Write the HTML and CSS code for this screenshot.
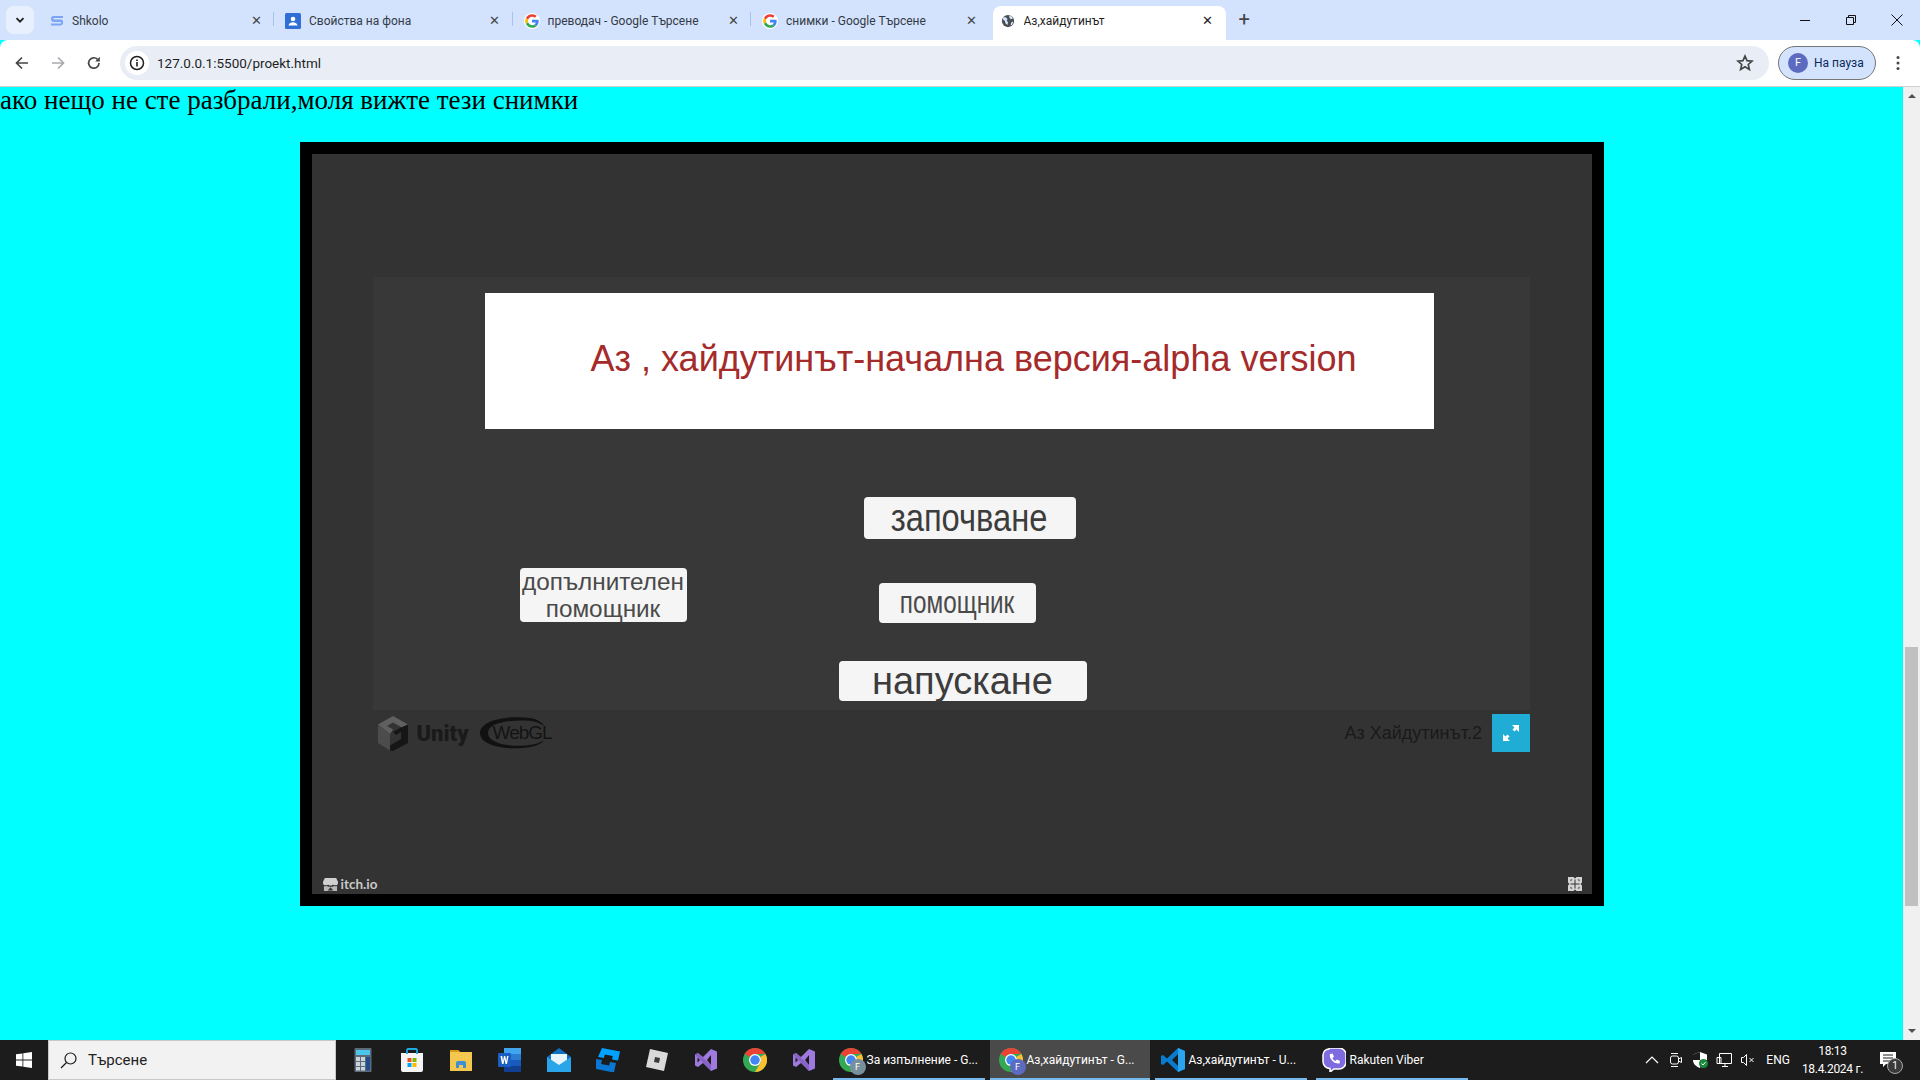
FILE: index.html
```html
<!DOCTYPE html>
<html lang="bg">
<head>
<meta charset="utf-8">
<title>Аз,хайдутинът</title>
<link rel="stylesheet" href="styles.css">
</head>
<body>
<svg class="defs" width="0" height="0" aria-hidden="true">
  <symbol id="g" viewBox="0 0 48 48">
    <circle cx="24" cy="24" r="24" fill="#fff"/>
    <path fill="#ea4335" d="M24 11c3.4 0 6.300 1.200 8.600 3.300l5.700-5.700C34.800 5.300 29.900 3.500 24 3.500 16 3.500 9.100 8.100 5.700 14.800l6.700 5.200C14 15 18.600 11 24 11z"/>
    <path fill="#4285f4" d="M44 24.500c0-1.500-.1-2.900-.4-4.300H24v8h11.300c-.5 2.600-2 4.800-4.200 6.300l6.500 5C41.500 36 44 30.800 44 24.500z"/>
    <path fill="#fbbc05" d="M12.400 28c-.4-1.200-.6-2.600-.6-4s.2-2.800.6-4l-6.700-5.200C4.300 17.500 3.500 20.700 3.500 24s.8 6.500 2.200 9.200z"/>
    <path fill="#34a853" d="M24 44.500c5.500 0 10.200-1.800 13.600-5l-6.500-5c-1.800 1.200-4.200 2-7.100 2-5.400 0-10-3.700-11.600-8.500l-6.700 5.200C9.100 39.900 16 44.500 24 44.500z"/>
  </symbol>
  <symbol id="chrome" viewBox="0 0 48 48">
    <circle cx="24" cy="24" r="24" fill="#34a853"/>
    <path fill="#ea4335" d="M24 0a24 24 0 0 1 20.800 12H24a12 12 0 0 0-10.400 6L3.200 12A24 24 0 0 1 24 0z"/>
    <path fill="#fbc02d" d="M44.800 12A24 24 0 0 1 24 48l10.400-18a12 12 0 0 0 0-12z"/>
    <circle cx="24" cy="24" r="12" fill="#fff"/>
    <circle cx="24" cy="24" r="9.500" fill="#4285f4"/>
  </symbol>
  <symbol id="vs" viewBox="0 0 24 24">
    <path fill="#9e7ade" d="M17 1l6 2.500v17L17 23l-8-8-5 4-3-1.500v-11L4 5l5 4zM17 7l-4 5 4 5zM3.500 9.500v5L6 12z"/>
    <path fill="#7f5cc0" d="M1 6.500L4 5l13 12v6L4 9.500 1 6.500z" opacity=".75"/>
  </symbol>
</svg>

<div class="tabstrip">
  <button class="tabsearch" aria-label="Раздели">
    <svg width="12" height="12" viewBox="0 0 12 12"><path d="M2.500 4.200L6 7.700l3.500-3.500" fill="none" stroke="#1f1f1f" stroke-width="1.800"/></svg>
  </button>
  <div class="tab tab-sep">
    <svg class="fav" viewBox="0 0 16 16"><path d="M2 5.500C2 3.500 3.500 3 5 3h9v2H5c-1 0-1 1.500 0 1.500h7c3 0 3 6-.5 6H2v-2h9.500c1 0 1-1.500 0-1.500H5C3 9 2 7.500 2 5.500z" fill="#7ba6f7"/></svg>
    <span class="tab-title">Shkolo</span>
    <span class="tab-x">✕</span>
  </div>
  <div class="tab tab-sep">
    <svg class="fav" viewBox="0 0 16 16"><rect width="16" height="16" rx="1.500" fill="#2f6fd6"/><circle cx="8" cy="6" r="2.300" fill="#fff"/><path d="M3.500 12.500c.5-2.500 2.500-3.300 4.500-3.300s4 .8 4.500 3.300z" fill="#fff"/></svg>
    <span class="tab-title">Свойства на фона</span>
    <span class="tab-x">✕</span>
  </div>
  <div class="tab tab-sep">
    <svg class="fav"><use href="#g"/></svg>
    <span class="tab-title">преводач - Google Търсене</span>
    <span class="tab-x">✕</span>
  </div>
  <div class="tab">
    <svg class="fav"><use href="#g"/></svg>
    <span class="tab-title">снимки - Google Търсене</span>
    <span class="tab-x">✕</span>
  </div>
  <div class="tab tab-active">
    <svg class="fav" viewBox="0 0 16 16"><circle cx="8" cy="8" r="7" fill="#4a4d52"/><path d="M3 3.500l3 .5 1.500 2-1 1.500 1.500 2-.5 3-2.500-2-.5-2.500L2 6zM9.500 1.500l3 1.500 1 2.500-2.500.5-1.500-2zM13 8.500l1 1-1.500 3-1.500.5.500-3z" fill="#d3e3fd"/></svg>
    <span class="tab-title">Аз,хайдутинът</span>
    <span class="tab-x">✕</span>
  </div>
  <span class="newtab">+</span>
  <div class="winctl">
    <svg width="12" height="12" viewBox="0 0 12 12"><path d="M1 6.500h10" stroke="#111" fill="none"/></svg>
    <svg width="12" height="12" viewBox="0 0 12 12"><path d="M1.500 3.500h7v7h-7zM3.500 3.500v-2h7v7h-2" stroke="#111" fill="none"/></svg>
    <svg width="12" height="12" viewBox="0 0 12 12"><path d="M.5.500l11 11M11.500.500l-11 11" stroke="#111" fill="none"/></svg>
  </div>
</div>

<div class="toolbar">
  <svg class="navicon" viewBox="0 0 16 16"><path d="M14 8H3M8 2.500L2.500 8 8 13.500" fill="none" stroke="#444746" stroke-width="1.700"/></svg>
  <svg class="navicon" viewBox="0 0 16 16"><path d="M2 8h11M8 2.500L13.500 8 8 13.500" fill="none" stroke="#a9abae" stroke-width="1.700"/></svg>
  <svg class="navicon" viewBox="0 0 16 16"><path d="M13 8a5.200 5.200 0 1 1-1.500-3.700" fill="none" stroke="#444746" stroke-width="1.700"/><path d="M13.800 1.800v4.600H9.200z" fill="#444746"/></svg>
  <div class="omnibox">
    <span class="info">
      <svg width="16" height="16" viewBox="0 0 16 16"><circle cx="8" cy="8" r="6.500" fill="none" stroke="#1f1f1f" stroke-width="1.500"/><path d="M8 7v4.500M8 4.500v1.500" stroke="#1f1f1f" stroke-width="1.600"/></svg>
    </span>
    <span class="url">127.0.0.1:5500/proekt.html</span>
    <svg class="star" viewBox="0 0 16 16"><path d="M8 1.800l1.800 4.100 4.500.4-3.400 3 1 4.400L8 11.400l-3.900 2.300 1-4.400-3.400-3 4.500-.4z" fill="none" stroke="#444746" stroke-width="1.500"/></svg>
  </div>
  <div class="profile"><span class="avatar">F</span><span class="paused">На пауза</span></div>
  <svg class="menu" viewBox="0 0 4 16"><circle cx="2" cy="2.500" r="1.500" fill="#444746"/><circle cx="2" cy="8" r="1.500" fill="#444746"/><circle cx="2" cy="13.500" r="1.500" fill="#444746"/></svg>
</div>

<div class="viewport">
  <main class="page">
    <p class="intro">ако нещо не сте разбрали,моля вижте тези снимки</p>
    <div class="frame">
      <div class="player">
        <div class="canvas">
          <div class="title"><span>Аз , хайдутинът-начална версия-alpha version</span></div>
          <div class="btn btn-start"><span>започване</span></div>
          <div class="btn btn-extra"><span>допълнителен<br>помощник</span></div>
          <div class="btn btn-help"><span>помощник</span></div>
          <div class="btn btn-quit"><span>напускане</span></div>
        </div>
        <div class="unity-footer">
          <svg class="unity-cube" viewBox="0 0 30 35">
            <path d="M15 0l15 8.500-6 3L15 6.500 9 10l6 3.500-3 4.500L0 8.500z" fill="#606060"/>
            <path d="M0 8.500L12 18v16.500L0 27z" fill="#4c4c4c"/>
            <path d="M30 8.500V27l-15 8-3-.5v-5l6-3.500 5-3v-7l-5 3-3-3 7-4z" fill="#161616"/>
          </svg>
          <span class="unity-word">Unity</span>
          <span class="webgl">
            <svg class="webgl-ring" viewBox="0 0 76 32"><path d="M50 1C28-2 0 3 0 16s28 18 50 14c8-1.500 12-4 14-7-4 3-10 5-18 5.500C28 30 8 26 8 16S28 3 46 3.500c8 .3 14 2.500 18 5.500-2-4-7-7-14-8z" fill="#111"/></svg>
            <span class="webgl-word">WebGL</span>
          </span>
          <span class="game-name">Аз Хайдутинът.2</span>
          <span class="fs-btn">
            <svg width="18" height="18" viewBox="0 0 18 18"><path d="M10 1h7v7l-2.500-2.500-2 2-2-2 2-2zM8 17H1v-7l2.500 2.500 2-2 2 2-2 2z" fill="#fff"/></svg>
          </span>
        </div>
        <div class="itch">
          <svg class="itch-icon" viewBox="0 0 16 16"><path d="M2 1h12l2 4v2a2 2 0 0 1-3 1.500A2 2 0 0 1 10.500 8 2 2 0 0 1 8 9a2 2 0 0 1-2.500-1A2 2 0 0 1 3 8.500 2 2 0 0 1 0 7V5z" fill="#d0d0d0"/><path d="M1 9.500c1 .5 2 .5 3 0 1 .5 2 1 4 1s3-.5 4-1c1 .5 2 .5 3 0V15H1z" fill="#b8b8b8"/><path d="M8 11l-3 3.500h6z" fill="#333"/></svg>
          <span>itch.io</span>
        </div>
        <svg class="itch-fs" viewBox="0 0 14 14"><path d="M0 0h5.500L7 1.500 8.500 0H14v5.500L12.500 7 14 8.500V14H8.500L7 12.500 5.500 14H0V8.500L1.500 7 0 5.500z" fill="#d4d4d4"/><path d="M6.500 2.500h1v4h4v1h-4v4h-1v-4h-4v-1h4z" fill="#333"/><path d="M2.500 2.500h2l-2 2zM11.500 2.500v2l-2-2zM2.500 11.500v-2l2 2zM11.500 11.500h-2l2-2z" fill="#333"/></svg>
      </div>
    </div>
  </main>
  <aside class="scrollbar">
    <span class="arrow-up"></span>
    <span class="thumb"></span>
    <span class="arrow-down"></span>
  </aside>
</div>

<footer class="taskbar">
  <span class="start">
    <svg width="16" height="16" viewBox="0 0 16 16"><path d="M0 2.300l6.500-.9v6.200H0zM7.300 1.300L16 0v7.600H7.300zM0 8.400h6.500v6.200L0 13.700zM7.300 8.400H16V16l-8.700-1.300z" fill="#fff"/></svg>
  </span>
  <div class="search">
    <svg width="17" height="17" viewBox="0 0 17 17"><circle cx="10.500" cy="6.500" r="5.500" fill="none" stroke="#1c1c1c" stroke-width="1.200"/><path d="M6.500 10.500L1 16" stroke="#1c1c1c" stroke-width="1.300"/></svg>
    <span>Търсене</span>
  </div>
  <div class="pinned">
    <span class="pin"><svg class="tb-ic" viewBox="0 0 24 24"><rect x="3.500" y="0" width="17" height="24" rx="1" fill="#5d6b78"/><rect x="5" y="2" width="14" height="5" fill="#49c6ea"/><path d="M5 9h4v4H5zM10 9h4v4h-4zM5 14h4v4H5zM10 14h4v4h-4zM5 19h4v3.500H5zM10 19h4v3.500h-4z" fill="#c9d3da"/><rect x="15" y="9" width="4" height="13.500" fill="#1e4f8c"/></svg></span>
    <span class="pin"><svg class="tb-ic" viewBox="0 0 24 24"><path d="M1 5h22v17a2 2 0 0 1-2 2H3a2 2 0 0 1-2-2z" fill="#f5f5f5"/><path d="M7 6V2a1 1 0 0 1 1-1h8a1 1 0 0 1 1 1v4" fill="none" stroke="#21a8e0" stroke-width="1.800"/><path d="M7.500 10h4v4h-4z" fill="#f25022"/><path d="M12.500 10h4v4h-4z" fill="#7fba00"/><path d="M7.500 15h4v4h-4z" fill="#00a4ef"/><path d="M12.500 15h4v4h-4z" fill="#ffb900"/></svg></span>
    <span class="pin"><svg class="tb-ic" viewBox="0 0 24 24"><path d="M1 2h8l2 2h12v19H1z" fill="#f4c84e"/><path d="M1 2h8l2 2H1z" fill="#d99a16"/><path d="M7 20v-5a2 2 0 0 1 2-2h6a2 2 0 0 1 2 2v5h-3v-3h-4v3z" fill="#3f8fd2"/></svg></span>
    <span class="pin"><svg class="tb-ic" viewBox="0 0 24 24"><path d="M6 0h17v6H6z" fill="#41a5ee"/><path d="M6 6h17v6H6z" fill="#2b7cd3"/><path d="M6 12h17v6H6z" fill="#185abd"/><path d="M6 18h17v6H6z" fill="#103f91"/><rect x="0" y="5" width="13" height="14" rx="1" fill="#1a5ec2"/><path d="M2.500 8l1.500 8h1.500l1-5 1 5h1.500l1.500-8H9l-.8 5-1-5H6l-1 5-.8-5z" fill="#fff"/></svg></span>
    <span class="pin"><svg class="tb-ic" viewBox="0 0 24 24"><path d="M0 9l12-9 12 9v15H0z" fill="#0f6fc0"/><path d="M4 6h16v8l-8 5-8-5z" fill="#e8f4fb"/><path d="M0 9l12 8 12-8v15H0z" fill="#29a5ea"/></svg></span>
    <span class="pin"><svg class="tb-ic" viewBox="0 0 24 24"><path d="M6 0l18 3.500-2 9-6-1 .8-3.500-8-1.500-.8 3.500-6-1z" fill="#00a2ff"/><path d="M0 11l6 1-.8 4 8 1.500.8-3.500 6 1-2 9.500L0 21z" fill="#0a78d2"/></svg></span>
    <span class="pin"><svg class="tb-ic" viewBox="0 0 24 24"><path d="M5 1l18 4-4 18-18-4z" fill="#dadada"/><path d="M10 9l5 1-1 5-5-1z" fill="#3a3a3a"/></svg></span>
    <span class="pin"><svg class="tb-ic"><use href="#vs"/></svg></span>
    <span class="pin"><svg class="tb-ic"><use href="#chrome"/></svg></span>
    <span class="pin"><svg class="tb-ic"><use href="#vs"/></svg></span>
  </div>
  <div class="tasks">
    <div class="task"><span class="task-ic"><svg class="tb-ic"><use href="#chrome"/></svg><span class="badge badge-grey">F</span></span><span class="task-txt">За изпълнение - G...</span></div>
    <div class="task task-active"><span class="task-ic"><svg class="tb-ic"><use href="#chrome"/></svg><span class="badge">F</span></span><span class="task-txt">Аз,хайдутинът - G...</span></div>
    <div class="task"><span class="task-ic"><svg class="tb-ic" viewBox="0 0 24 24"><path d="M17 0l7 3v18l-7 3L6 13.500 2 17l-2-1V8l2-1 4 3.500z" fill="#0a7ccf"/><path d="M17 6l-6 6 6 6z" fill="#1c1c1c"/><path d="M17 0l7 3v18l-7 3z" fill="#2aa4f0"/></svg></span><span class="task-txt">Аз,хайдутинът - U...</span></div>
    <div class="task"><span class="task-ic"><svg class="tb-ic" viewBox="0 0 24 24"><path d="M7 0h10a7 7 0 0 1 7 7v7a7 7 0 0 1-7 7h-5l-4 3v-3.500A7 7 0 0 1 1 14V7a6 6 0 0 1 6-6z" fill="#7f6be0" stroke="#fff" stroke-width="1.500"/><path d="M8 6l2.500-.5 1.500 3-1.500 1.500c.5 1.500 1.500 2.500 3 3l1.500-1.500 3 1.500-.5 2.500c-5 1-11-5-9.500-9.500z" fill="#fff"/></svg></span><span class="task-txt">Rakuten Viber</span></div>
  </div>
  <div class="tray">
    <svg class="tray-ic" viewBox="0 0 16 16"><path d="M2 11l6-6 6 6" fill="none" stroke="#fff" stroke-width="1.200"/></svg>
    <svg class="tray-ic" viewBox="0 0 16 16"><rect x="2.500" y="4" width="8" height="8" rx="2" fill="none" stroke="#fff"/><path d="M10.500 7l3-1.500v5l-3-1.500M3 1.500h7M3 14.500h7" fill="none" stroke="#fff"/></svg>
    <svg class="tray-ic" viewBox="0 0 16 16"><path d="M8 0l7 2.500V8c0 4-3 6.500-7 8-4-1.500-7-4-7-8V2.500z" fill="#fff"/><path d="M8 0v8H1V2.500zM8 8h7c0 4-3 6.500-7 8z" fill="#1c1c1c"/><circle cx="11.500" cy="11.500" r="4.500" fill="#1a8a3c"/><path d="M9.500 11.500l1.500 1.500 2.500-2.800" fill="none" stroke="#fff"/></svg>
    <svg class="tray-ic" viewBox="0 0 16 16"><path d="M3.500 1.500h12v10h-12zM1 5.500h4v6H1zM9 11.500v3M6 14.500h6" fill="none" stroke="#fff"/></svg>
    <svg class="tray-ic" viewBox="0 0 16 16"><path d="M1.500 5.500h2l3-3v11l-3-3h-2zM9.500 6l4 4M13.500 6l-4 4" fill="none" stroke="#fff"/></svg>
    <span class="lang">ENG</span>
    <span class="clock"><span>18:13</span><span>18.4.2024 г.</span></span>
    <span class="notif">
      <svg width="16" height="16" viewBox="0 0 16 16"><path d="M0 0h16v12H6l-3 3v-3H0z" fill="#fff"/><path d="M3 3h10M3 6h10M3 9h7" stroke="#1c1c1c"/></svg>
      <span class="notif-n">1</span>
    </span>
  </div>
</footer>
</body>
</html>
```

FILE: styles.css
```css
* { box-sizing: border-box; }
html, body { margin: 0; height: 100%; overflow: hidden; }
body {
  width: 1920px;
  height: 1080px;
  display: flex;
  flex-direction: column;
  font-family: "Roboto", "Noto Sans", sans-serif;
  background: #0ff;
}
.defs { position: absolute; }

/* Tab strip */
.tabstrip {
  height: 40px;
  flex: none;
  display: flex;
  align-items: flex-start;
  background: #d3e3fd;
  padding-left: 6px;
}
.tabsearch {
  width: 28px;
  height: 28px;
  margin-top: 6px;
  padding: 0;
  border: 0;
  border-radius: 8px;
  background: #e9f0fd;
  display: flex;
  align-items: center;
  justify-content: center;
}
.tab {
  width: 238.5px;
  height: 34px;
  margin-top: 6px;
  padding: 1px 11px 6px 0;
  position: relative;
  display: flex;
  align-items: center;
  font-size: 12px;
  color: #333a45;
}
.tab:first-of-type { width: 240px; }
.tab .fav { width: 16px; height: 16px; flex: none; margin-left: 11px; margin-right: 8px; }
.tabsearch + .tab .fav { margin-left: 15px; margin-right: 7px; }
.tab-title { flex: 1; white-space: nowrap; overflow: hidden; }
.tab-x { font-size: 13px; color: #444746; width: 14px; text-align: center; }
.tab-sep::after {
  content: "";
  position: absolute;
  right: 0;
  top: 6px;
  height: 14px;
  width: 1px;
  background: #a8c1ee;
}
.tab-active {
  width: 233px;
  margin-left: 3px;
  height: 34px;
  background: #fff;
  border-radius: 8px 8px 0 0;
  color: #1f1f1f;
}
.tab-active .fav { margin-left: 8px; margin-right: 9px; width: 14px; height: 14px; }
.tab-active .tab-x { color: #1f1f1f; }
.newtab { margin: 7px 0 0 13px; font-size: 20px; line-height: 24px; color: #444746; }
.winctl {
  margin-left: auto;
  width: 138px;
  height: 40px;
  padding: 0 17px 0 17px;
  display: flex;
  align-items: center;
  justify-content: space-between;
}

/* Toolbar */
.toolbar {
  height: 47px;
  flex: none;
  display: flex;
  align-items: center;
  background: #fff;
  border-bottom: 1px solid #d0d0d0;
  border-radius: 8px 8px 0 0;
  padding: 0 0 1px 14px;
  gap: 20px;
}
.navicon { width: 16px; height: 16px; flex: none; }
.omnibox {
  width: 1649px;
  height: 34px;
  flex: none;
  border-radius: 17px;
  background: #e9eef6;
  display: flex;
  align-items: center;
  padding: 0 15px 0 5px;
  margin-left: -2px;
}
.info {
  width: 24px;
  height: 24px;
  border-radius: 50%;
  background: #fff;
  display: flex;
  align-items: center;
  justify-content: center;
}
.url { margin-left: 8px; font-size: 13.5px; color: #1f1f1f; flex: 1; }
.star { width: 18px; height: 18px; }
.profile {
  width: 98px;
  height: 34px;
  flex: none;
  margin-left: -11px;
  border: 1px solid #747775;
  border-radius: 17px;
  background: #d3e3fd;
  display: flex;
  align-items: center;
  padding-left: 9px;
  gap: 6px;
  font-size: 12px;
  color: #0a2a5c;
}
.avatar {
  width: 20px;
  height: 20px;
  border-radius: 50%;
  background: #5c6bc0;
  color: #fff;
  display: flex;
  align-items: center;
  justify-content: center;
  font-size: 11px;
  flex: none;
}
.menu { width: 4px; height: 16px; flex: none; }

/* Page */
.viewport { flex: 1; display: flex; min-height: 0; }
.page { flex: 1; min-width: 0; background: #0ff; }
.intro {
  margin: 0;
  font: 27px/27px "Liberation Serif", serif;
  color: #000;
}
.frame {
  width: 1304px;
  height: 764px;
  margin: 28px auto 0;
  border: 12px solid #000;
  background: #333;
}
.player {
  position: relative;
  width: 1280px;
  height: 740px;
  padding: 123px 62px 0 61px;
}
.canvas {
  position: relative;
  width: 1157px;
  height: 433px;
  background: #383838;
}
.title {
  position: absolute;
  left: 112px;
  top: 16px;
  width: 949px;
  height: 136px;
  background: #fff;
  color: #a52a2a;
  font: 36px/132px "Liberation Sans", sans-serif;
  text-align: center;
  padding-left: 29px;
  white-space: nowrap;
}
.btn {
  position: absolute;
  background: #f5f5f5;
  border-radius: 4px;
  color: #3c3c3c;
  font-family: "Liberation Sans", sans-serif;
  text-align: center;
  white-space: nowrap;
  display: flex;
  align-items: center;
  justify-content: center;
}
.btn span { display: inline-block; }
.btn-start { left: 491px; top: 220px; width: 212px; height: 42px; font-size: 38px; }
.btn-start span { transform: scaleX(.86); }
.btn-extra { left: 147px; top: 291px; width: 167px; height: 54px; font-size: 24.300px; line-height: 27px; color: #4a4a4a; }
.btn-help { left: 506px; top: 306px; width: 157px; height: 40px; font-size: 31px; color: #4a4a4a; }
.btn-help span { transform: scaleX(.783); }
.btn-quit { left: 466px; top: 384px; width: 248px; height: 40px; font-size: 38px; }

.unity-footer {
  width: 1158px;
  height: 42px;
  padding: 4px 0 0 5px;
  display: flex;
  align-items: flex-start;
}
.unity-cube { width: 30px; height: 35px; flex: none; margin-top: 2px; }
.unity-word {
  margin: 8px 0 0 9px;
  font: 900 22px/24px "Roboto", sans-serif;
  color: #1a1a1a;
}
.webgl { position: relative; width: 76px; height: 32px; margin: 3px 0 0 11px; }
.webgl-ring {
  position: absolute;
  left: 0;
  top: 0;
  width: 76px;
  height: 32px;
}
.webgl-word {
  position: absolute;
  left: 13px;
  top: 4px;
  font: 19px/24px "Liberation Sans", sans-serif;
  letter-spacing: -1px;
  color: #141414;
}
.game-name {
  margin: 6px 0 0 auto;
  font: 18px/26px "Liberation Sans", sans-serif;
  color: #1a1a1a;
}
.fs-btn {
  width: 38px;
  height: 38px;
  margin-left: 10px;
  margin-right: .5px;
  background: #1fadd6;
  display: flex;
  align-items: center;
  justify-content: center;
  flex: none;
}
.itch {
  position: absolute;
  left: 11px;
  bottom: 1px;
  display: flex;
  align-items: center;
  gap: 3px;
  font: bold 13.500px/18px "Lato", sans-serif;
  color: #c8c8c8;
}
.itch-icon { width: 15px; height: 15px; }
.itch-fs { position: absolute; right: 10px; bottom: 3px; width: 14px; height: 14px; }

/* Scrollbar */
.scrollbar {
  width: 17px;
  flex: none;
  position: relative;
  background: #f0f0f0;
}
.thumb {
  position: absolute;
  left: 2px;
  right: 2px;
  top: 560px;
  height: 259px;
  background: #c0c0c0;
}
.arrow-up, .arrow-down {
  position: absolute;
  left: 5px;
  width: 0;
  height: 0;
  border-left: 4px solid transparent;
  border-right: 4px solid transparent;
}
.arrow-up { top: 7px; border-bottom: 4px solid #505050; }
.arrow-down { bottom: 7px; border-top: 4px solid #505050; }

/* Taskbar */
.taskbar {
  height: 40px;
  flex: none;
  display: flex;
  align-items: stretch;
  background: #1c1c1c;
  color: #fff;
}
.start { width: 48px; display: flex; align-items: center; justify-content: center; }
.search {
  width: 288px;
  background: #f2f2f2;
  border: 1px solid #c8c8c8;
  display: flex;
  align-items: center;
  padding-left: 11px;
  gap: 11px;
  font-size: 15px;
  color: #222;
}
.pinned { display: flex; padding-left: 2.500px; }
.pin { width: 49px; display: flex; align-items: center; justify-content: center; }
.tb-ic { width: 24px; height: 24px; display: block; }
.tasks { display: flex; margin-left: 4px; gap: 5px; }
.task {
  width: 152px;
  position: relative;
  display: flex;
  align-items: center;
  padding: 1px 0 0 6px;
  font-size: 12px;
  border-bottom: 2px solid #76b9ed;
}
.task:last-child { margin-left: 4px; }
.task-active { width: 160px; background: #4a4a4a; padding-left: 9px; }
.task-ic { position: relative; width: 24px; height: 24px; margin: 0 4px 0 0; flex: none; }
.task-txt { white-space: nowrap; }
.badge {
  position: absolute;
  right: -3px;
  bottom: -3px;
  width: 16px;
  height: 16px;
  border-radius: 50%;
  background: #5c6bc0;
  color: #fff;
  font-size: 9px;
  line-height: 16px;
  text-align: center;
}
.badge-grey { background: #78909c; }
.tray { margin-left: auto; display: flex; align-items: center; padding-right: 24px; }
.tray-ic { width: 16px; height: 16px; margin-right: 8px; flex: none; }
.lang { font-size: 12px; margin: 0 12px 0 2px; }
.clock {
  display: flex;
  flex-direction: column;
  align-items: center;
  font-size: 12px;
  line-height: 18px;
  letter-spacing: -.3px;
  margin-right: 17px;
}
.notif { position: relative; width: 16px; height: 16px; }
.notif-n {
  position: absolute;
  left: 7px;
  top: 6px;
  width: 16px;
  height: 16px;
  border-radius: 50%;
  border: 1px solid #aaa;
  background: #3a3a3a;
  font-size: 10px;
  line-height: 14px;
  text-align: center;
}
```
